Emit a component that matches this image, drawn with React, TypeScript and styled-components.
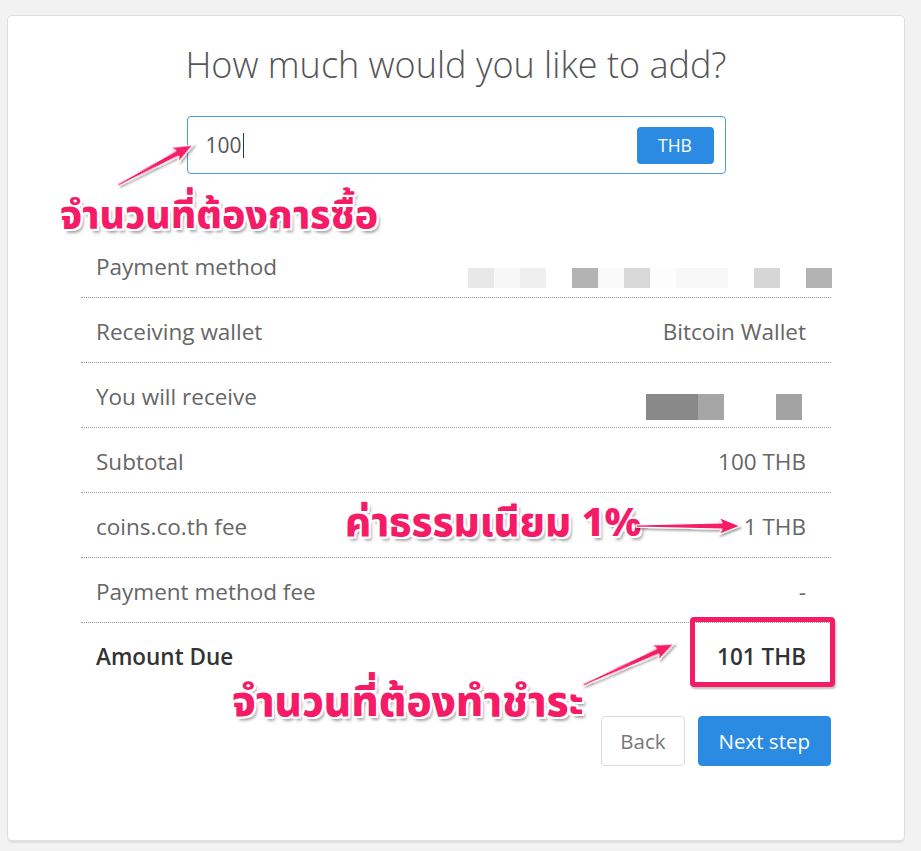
import React from "react";
import styled, { createGlobalStyle } from "styled-components";

const GlobalStyle = createGlobalStyle`
  html, body { margin: 0; padding: 0; }
  body {
    background: #f2f2f2;
    font-family: "Open Sans", "Noto Sans", "Liberation Sans", sans-serif;
    color: #666;
  }
  * { box-sizing: border-box; }
`;

const Page = styled.div`
  position: relative;
  width: 921px;
  height: 851px;
  padding: 15px 16px 10px 7px;
`;

const Card = styled.div`
  height: 826px;
  background: #fff;
  border: 1px solid #dedede;
  border-radius: 5px;
  box-shadow: 0 2px 0 #e2e2e2;
  padding: 26px 73px 0;
  display: flex;
  flex-direction: column;
  align-items: center;
`;

const Heading = styled.h1`
  margin: 0;
  font-family: "Open Sans", sans-serif;
  font-weight: 300;
  font-size: 36px;
  line-height: 45px;
  color: #555;
  text-align: center;
`;

const AmountBox = styled.div`
  margin-top: 29px;
  width: 539px;
  height: 58px;
  border: 1px solid #4a9be2;
  border-radius: 4px;
  display: flex;
  align-items: center;
  justify-content: space-between;
  padding: 0 11px 0 18px;
`;

const AmountText = styled.span`
  font-size: 21px;
  color: #555;
  display: flex;
  align-items: center;
`;

const Caret = styled.span`
  display: inline-block;
  width: 1px;
  height: 25px;
  background: #333;
  margin-left: 1px;
`;

const CurrencyButton = styled.button`
  width: 77px;
  height: 37px;
  border: none;
  border-radius: 4px;
  background: #2b8be2;
  color: #fff;
  font-family: "Open Sans", sans-serif;
  font-size: 17.5px;
  padding: 0;
`;

const Summary = styled.div`
  margin-top: 59px;
  width: 100%;
  display: flex;
  flex-direction: column;
`;

const Row = styled.div<{ $last?: boolean }>`
  height: ${(p) => (p.$last ? 64 : 65)}px;
  display: flex;
  align-items: center;
  justify-content: space-between;
  padding: 2px 25px 0 15px;
  border-bottom: ${(p) => (p.$last ? "none" : "1px dotted #9a9a9a")};
`;

const Label = styled.span<{ $strong?: boolean }>`
  font-size: 22.5px;
  font-weight: ${(p) => (p.$strong ? 600 : 400)};
  color: ${(p) => (p.$strong ? "#333" : "#666")};
`;

const Value = styled.span<{ $strong?: boolean }>`
  font-size: 22.5px;
  font-weight: ${(p) => (p.$strong ? 600 : 400)};
  color: ${(p) => (p.$strong ? "#333" : "#666")};
`;

const Mosaic = styled.div<{ $offset: number; $size: number; $shift: number }>`
  display: flex;
  align-self: flex-start;
  margin-top: ${(p) => p.$offset}px;
  margin-right: ${(p) => p.$shift}px;
  height: ${(p) => p.$size}px;
`;

const Tile = styled.span<{ $w: number }>`
  width: ${(p) => p.$w}px;
  height: 100%;
`;

const Actions = styled.div`
  margin-top: 29px;
  width: 100%;
  display: flex;
  justify-content: flex-end;
  gap: 13px;
`;

const Button = styled.button<{ $primary?: boolean }>`
  height: 50px;
  padding: 0 ${(p) => (p.$primary ? 20 : 18)}px;
  border-radius: 4px;
  border: 1px solid ${(p) => (p.$primary ? "#2b8be2" : "#dcdcdc")};
  background: ${(p) => (p.$primary ? "#2b8be2" : "#fff")};
  color: ${(p) => (p.$primary ? "#fff" : "#777")};
  font-family: "Open Sans", sans-serif;
  font-size: 20.5px;
`;

const Note = styled.div<{ $x: number; $y: number; $size: number }>`
  position: absolute;
  left: ${(p) => p.$x}px;
  top: ${(p) => p.$y}px;
  font-family: "Noto Sans Thai", "Loma", "Garuda", "Tlwg Typist", "Noto Sans", sans-serif;
  font-weight: 800;
  font-size: ${(p) => p.$size}px;
  line-height: 1.2;
  color: #f51b67;
  white-space: nowrap;
  text-shadow:
    -2px -2px 0 #fff, 2px -2px 0 #fff, -2px 2px 0 #fff, 2px 2px 0 #fff,
    0 -2px 0 #fff, 0 2px 0 #fff, -2px 0 0 #fff, 2px 0 0 #fff,
    3px 4px 3px rgba(0, 0, 0, 0.35);
`;

const HighlightBox = styled.div`
  position: absolute;
  left: 690px;
  top: 617px;
  width: 145px;
  height: 70px;
  border: 5px solid #f51b67;
  border-radius: 4px;
  box-shadow: 1px 2px 2px rgba(0, 0, 0, 0.25);
`;

const Overlay = styled.svg`
  position: absolute;
  left: 0;
  top: 0;
  pointer-events: none;
`;

type ArrowProps = { x1: number; y1: number; x2: number; y2: number };

const Arrow = ({ x1, y1, x2, y2 }: ArrowProps) => {
  const dx = x2 - x1;
  const dy = y2 - y1;
  const L = Math.sqrt(dx * dx + dy * dy);
  const deg = (Math.atan2(dy, dx) * 180) / Math.PI;
  const pts = [
    [0, -1.2],
    [L - 18, -3.2],
    [L - 21, -8.5],
    [L, 0],
    [L - 21, 8.5],
    [L - 18, 3.2],
    [0, 1.2],
  ]
    .map((p) => p.join(","))
    .join(" ");
  return (
    <g transform={`translate(${x1} ${y1}) rotate(${deg})`} filter="url(#arrowShadow)">
      <polygon points={pts} fill="#f51b67" stroke="#fff" strokeWidth={1.2} strokeLinejoin="round" />
    </g>
  );
};

type Tiles = [number, string][];

const paymentTiles: Tiles = [
  [26, "#e8e8e8"], [26, "#f7f7f7"], [26, "#efefef"], [26, "#ffffff"],
  [26, "#b3b3b3"], [26, "#f9f9f9"], [26, "#d8d8d8"], [26, "#fdfdfd"],
  [26, "#f8f8f8"], [26, "#f8f8f8"], [26, "#ffffff"], [26, "#d6d6d6"],
  [26, "#ffffff"], [26, "#b3b3b3"],
];

const receiveTiles: Tiles = [
  [26, "#898989"], [26, "#898989"], [26, "#a6a6a6"], [26, "#ffffff"],
  [26, "#ffffff"], [26, "#a3a3a3"],
];

const renderTiles = (tiles: Tiles) =>
  tiles.map(([w, c], i) => <Tile key={i} $w={w} style={{ background: c }} />);

export default function App() {
  return (
    <>
      <GlobalStyle />
      <Page>
        <Card>
          <Heading>How much would you like to add?</Heading>
          <AmountBox>
            <AmountText>
              100
              <Caret />
            </AmountText>
            <CurrencyButton>THB</CurrencyButton>
          </AmountBox>
          <Summary>
            <Row>
              <Label>Payment method</Label>
              <Mosaic $offset={33} $size={20} $shift={-26}>
                {renderTiles(paymentTiles)}
              </Mosaic>
            </Row>
            <Row>
              <Label>Receiving wallet</Label>
              <Value>Bitcoin Wallet</Value>
            </Row>
            <Row>
              <Label>You will receive</Label>
              <Mosaic $offset={29} $size={26} $shift={4}>
                {renderTiles(receiveTiles)}
              </Mosaic>
            </Row>
            <Row>
              <Label>Subtotal</Label>
              <Value>100 THB</Value>
            </Row>
            <Row>
              <Label>coins.co.th fee</Label>
              <Value>1 THB</Value>
            </Row>
            <Row>
              <Label>Payment method fee</Label>
              <Value>-</Value>
            </Row>
            <Row $last>
              <Label $strong>Amount Due</Label>
              <Value $strong>101 THB</Value>
            </Row>
          </Summary>
          <Actions>
            <Button>Back</Button>
            <Button $primary>Next step</Button>
          </Actions>
        </Card>

        <HighlightBox />
        <Note $x={60} $y={194} $size={39}>จำนวนที่ต้องการซื้อ</Note>
        <Note $x={345} $y={500} $size={40}>ค่าธรรมเนียม 1%</Note>
        <Note $x={232} $y={678} $size={42}>จำนวนที่ต้องทำชำระ</Note>

        <Overlay width={921} height={851} viewBox="0 0 921 851">
          <defs>
            <filter id="arrowShadow" x="-20%" y="-50%" width="140%" height="200%">
              <feDropShadow dx="1.5" dy="2" stdDeviation="1.2" floodColor="#000" floodOpacity="0.35" />
            </filter>
          </defs>
          <Arrow x1={118} y1={185} x2={193} y2={145} />
          <Arrow x1={636} y1={526} x2={740} y2={526} />
          <Arrow x1={583} y1={685} x2={674} y2={644} />
        </Overlay>
      </Page>
    </>
  );
}
